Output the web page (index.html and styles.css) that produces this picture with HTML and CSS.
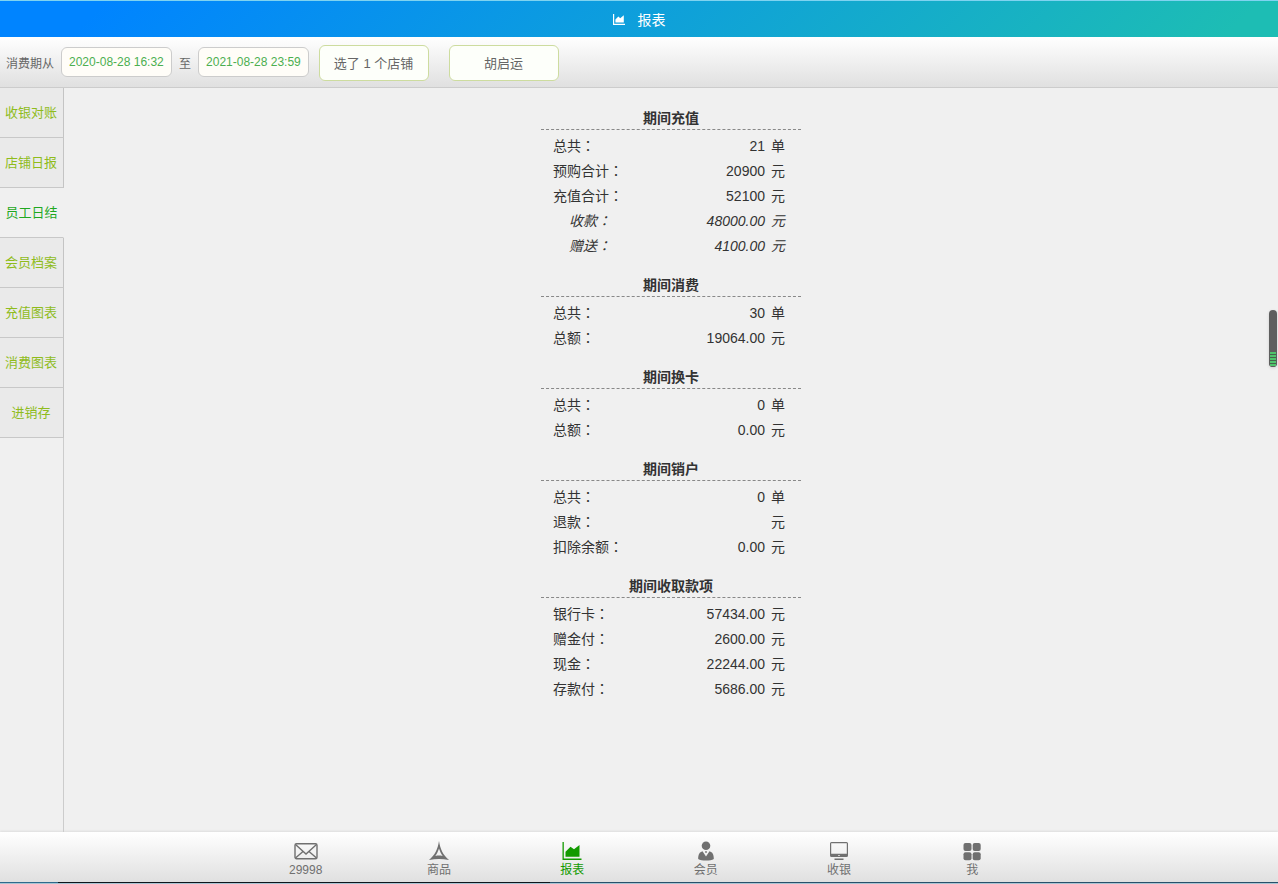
FILE: index.html
```html
<!DOCTYPE html>
<html lang="zh-CN">
<head>
<meta charset="utf-8">
<meta name="viewport" content="width=device-width, initial-scale=1">
<title>报表</title>
<link rel="stylesheet" href="styles.css">
</head>
<body>
<div class="app">
  <header class="titlebar">
    <svg class="titlebar-icon" viewBox="0 0 20 18" aria-hidden="true"><path d="M0 0h2v16h18v2H0z"/><path d="M4 14V9l5-5 3 3 6-5v12z"/></svg>
    <h1 class="titlebar-text">报表</h1>
  </header>

  <form class="filters">
    <label class="filter-label" for="from">消费期从</label>
    <input class="date" id="from" type="text" value="2020-08-28 16:32">
    <label class="filter-label" for="to">至</label>
    <input class="date" id="to" type="text" value="2021-08-28 23:59">
    <div class="choices">
      <button class="choice" type="button">选了 1 个店铺</button>
      <button class="choice" type="button">胡启运</button>
    </div>
  </form>

  <div class="body">
    <nav class="side">
      <a class="side-item" href="#">收银对账</a>
      <a class="side-item" href="#">店铺日报</a>
      <a class="side-item side-item-active" href="#" aria-current="page">员工日结</a>
      <a class="side-item" href="#">会员档案</a>
      <a class="side-item" href="#">充值图表</a>
      <a class="side-item" href="#">消费图表</a>
      <a class="side-item" href="#">进销存</a>
    </nav>

    <main class="report">
      <table class="section">
        <caption>期间充值</caption>
        <tr><th>总共<span class="colon" lang="zh-TW">：</span></th><td>21</td><td class="unit">单</td></tr>
        <tr><th>预购合计<span class="colon" lang="zh-TW">：</span></th><td>20900</td><td class="unit">元</td></tr>
        <tr><th>充值合计<span class="colon" lang="zh-TW">：</span></th><td>52100</td><td class="unit">元</td></tr>
        <tr class="sub"><th>收款<span class="colon" lang="zh-TW">：</span></th><td>48000.00</td><td class="unit">元</td></tr>
        <tr class="sub"><th>赠送<span class="colon" lang="zh-TW">：</span></th><td>4100.00</td><td class="unit">元</td></tr>
      </table>
      <table class="section">
        <caption>期间消费</caption>
        <tr><th>总共<span class="colon" lang="zh-TW">：</span></th><td>30</td><td class="unit">单</td></tr>
        <tr><th>总额<span class="colon" lang="zh-TW">：</span></th><td>19064.00</td><td class="unit">元</td></tr>
      </table>
      <table class="section">
        <caption>期间换卡</caption>
        <tr><th>总共<span class="colon" lang="zh-TW">：</span></th><td>0</td><td class="unit">单</td></tr>
        <tr><th>总额<span class="colon" lang="zh-TW">：</span></th><td>0.00</td><td class="unit">元</td></tr>
      </table>
      <table class="section">
        <caption>期间销户</caption>
        <tr><th>总共<span class="colon" lang="zh-TW">：</span></th><td>0</td><td class="unit">单</td></tr>
        <tr><th>退款<span class="colon" lang="zh-TW">：</span></th><td></td><td class="unit">元</td></tr>
        <tr><th>扣除余额<span class="colon" lang="zh-TW">：</span></th><td>0.00</td><td class="unit">元</td></tr>
      </table>
      <table class="section">
        <caption>期间收取款项</caption>
        <tr><th>银行卡<span class="colon" lang="zh-TW">：</span></th><td>57434.00</td><td class="unit">元</td></tr>
        <tr><th>赠金付<span class="colon" lang="zh-TW">：</span></th><td>2600.00</td><td class="unit">元</td></tr>
        <tr><th>现金<span class="colon" lang="zh-TW">：</span></th><td>22244.00</td><td class="unit">元</td></tr>
        <tr><th>存款付<span class="colon" lang="zh-TW">：</span></th><td>5686.00</td><td class="unit">元</td></tr>
      </table>
    </main>
    <div class="gauge"><div class="gauge-level"></div></div>
  </div>

  <footer class="tabs">
    <nav class="tabs-list">
      <a class="tab" href="#">
        <svg class="tab-icon" viewBox="0 0 24 20" fill="none" stroke="currentColor" stroke-width="1.4" aria-hidden="true"><rect x="1" y="2.700" width="22" height="15" rx="1.500"/><path d="M1.500 3.500 12 13 22.500 3.500M1.500 17 9 10.500M22.500 17 15 10.500"/></svg>
        <span>29998</span>
      </a>
      <a class="tab" href="#">
        <svg class="tab-icon" viewBox="0 0 24 20" fill="currentColor" fill-rule="evenodd" aria-hidden="true"><path d="M12 0C13.300 8 16 14 22 19 15 17.500 9 17.500 2 19 8 14 10.700 8 12 0zM12 7.500C11 10.500 10 12.500 8.300 15 11 14.400 13 14.400 15.700 15 14 12.500 13 10.500 12 7.500z"/></svg>
        <span>商品</span>
      </a>
      <a class="tab tab-active" href="#" aria-current="page">
        <svg class="tab-icon" viewBox="0 0 24 20" fill="currentColor" aria-hidden="true"><path d="M2.500 1h1.300v16.600H21.500V19h-19z"/><path d="M5.500 15.800v-5l5-5 3.500 2.500 5.500-4.300v11.800z"/></svg>
        <span>报表</span>
      </a>
      <a class="tab" href="#">
        <svg class="tab-icon" viewBox="0 0 24 20" fill="currentColor" aria-hidden="true"><circle cx="12" cy="4.700" r="4.300"/><path d="M8.500 10.300 12 15.500l3.500-5.200c3 .8 4.300 3.200 4.300 7.700-3 2-12.600 2-15.600 0 0-4.500 1.300-6.900 4.300-7.700zM11 10.300h2l-.5 1.700h-1z"/></svg>
        <span>会员</span>
      </a>
      <a class="tab" href="#">
        <svg class="tab-icon" viewBox="0 0 24 20" fill="currentColor" fill-rule="evenodd" aria-hidden="true"><path d="M4.500 1h15A1.500 1.500 0 0 1 21 2.500v12a1.500 1.500 0 0 1-1.500 1.500h-15A1.500 1.500 0 0 1 3 14.500v-12A1.500 1.500 0 0 1 4.500 1zM4.200 2.200v10.600h15.600V2.200zM11.300 14h1.400v1h-1.400zM7.500 17.500h9V19h-9z"/></svg>
        <span>收银</span>
      </a>
      <a class="tab" href="#">
        <svg class="tab-icon" viewBox="0 0 24 20" fill="currentColor" aria-hidden="true"><rect x="3.500" y="2" width="8" height="8" rx="2"/><rect x="12.700" y="2" width="8" height="8" rx="2"/><rect x="3.500" y="11.200" width="8" height="8" rx="2"/><rect x="12.700" y="11.200" width="8" height="8" rx="2"/></svg>
        <span>我</span>
      </a>
    </nav>
  </footer>
  <div class="edge"></div>
</div>
</body>
</html>
```

FILE: styles.css
```css
* {
  box-sizing: border-box;
}

body {
  margin: 0;
  font-family: "Liberation Sans", "Noto Sans CJK SC", sans-serif;
  font-size: 14px;
  color: #333;
  background: #f0f0f0;
}

a {
  text-decoration: none;
}

.app {
  display: flex;
  flex-direction: column;
  min-height: 100vh;
}

.titlebar {
  display: flex;
  align-items: center;
  justify-content: center;
  gap: 13px;
  height: 37px;
  border-top: 1px solid #7fd3f0;
  color: #fff;
  background: linear-gradient(135deg, #0084ff 8%, #1dbdb4 96%);
}

.titlebar-icon {
  width: 12px;
  height: 11px;
  fill: currentColor;
}

.titlebar-text {
  margin: 0;
  padding-top: 1px;
  font-size: 14px;
  font-weight: 400;
  line-height: 20px;
}

.filters {
  display: flex;
  align-items: center;
  gap: 7px;
  height: 51px;
  padding: 0 6px;
  border-bottom: 1px solid #ccc;
  background: linear-gradient(#fff, #e0e0e0);
}

.filter-label {
  font-size: 12px;
  color: #666;
}

.date {
  width: 111px;
  height: 30px;
  padding: 0 7px;
  border: 1px solid #ccc;
  border-radius: 6px;
  font-family: inherit;
  font-size: 12px;
  color: #4caf50;
  background: #fffdf8;
}

.choices {
  display: flex;
  gap: 20px;
  padding: 1px 3px 0;
}

.choice {
  width: 110px;
  height: 36px;
  padding: 0 1px 0 0;
  border: 1px solid #cddc9f;
  border-radius: 6px;
  font-family: inherit;
  font-size: 13px;
  color: #666;
  background: #fdfffa;
}

.body {
  position: relative;
  display: flex;
  flex: 1;
}

.side {
  display: flex;
  flex-direction: column;
  width: 64px;
  background: linear-gradient(to left, #ccc 1px, transparent 1px);
}

.side-item {
  height: 50px;
  padding-right: 1px;
  border-right: 1px solid #c4c4c4;
  border-bottom: 1px solid #c8c8c8;
  font-size: 13px;
  line-height: 50px;
  text-align: center;
  color: #8fbc1c;
  background: #eaeaea;
}

.side-item-active {
  padding-right: 0;
  border-right-color: #f0f0f0;
  color: #1fa81f;
  background: #f0f0f0;
}

.report {
  display: flex;
  flex: 1;
  flex-direction: column;
  align-items: center;
  gap: 17px;
  padding: 20px 0;
}

.section {
  width: 260px;
  padding: 3px 16px 0 12px;
  border-spacing: 0;
}

.section caption {
  height: 22px;
  border-bottom: 1px dashed #888;
  font-weight: bold;
  line-height: 20px;
}

.section th,
.section td {
  height: 25px;
  padding: 0;
  font-weight: normal;
  line-height: 20px;
  white-space: nowrap;
}

.section th {
  text-align: left;
}

.section td {
  text-align: right;
}

.section .unit {
  width: 20px;
}

.colon {
  font-family: "Noto Sans CJK TC", sans-serif;
}

.section .sub th {
  padding-left: 16px;
}

.sub {
  font-style: italic;
}

.gauge {
  position: absolute;
  top: 222px;
  right: 1px;
  display: flex;
  align-items: flex-end;
  width: 8px;
  height: 57px;
  overflow: hidden;
  border-radius: 4px;
  background: #5e5e5e;
  box-shadow: 0 1px 3px #ccc;
}

.gauge-level {
  width: 8px;
  height: 15px;
  border: solid #5e5e5e;
  border-width: 0 1px 1px;
  background: repeating-linear-gradient(#4fc46c 0 2px, #47634d 2px 3px);
}

.tabs {
  display: flex;
  justify-content: center;
  height: 50px;
  background: linear-gradient(#fff, #e0e0e0);
  box-shadow: 0 -1px 2px #ddd;
}

.tabs-list {
  display: grid;
  flex: 1;
  grid-template-columns: repeat(6, 1fr);
  max-width: 800px;
}

.tab {
  display: flex;
  flex-direction: column;
  align-items: center;
  padding-top: 9px;
  font-size: 12px;
  line-height: 18px;
  color: #707070;
}

.tab-active {
  color: #129a00;
}

.tab-icon {
  width: 24px;
  height: 20px;
}

.edge {
  height: 2px;
  border-bottom: 1px solid #a9c4d2;
  background: linear-gradient(to right, #2f6a8c 0 58px, #0d151c 58px 550px, #27506a 550px);
}
```
